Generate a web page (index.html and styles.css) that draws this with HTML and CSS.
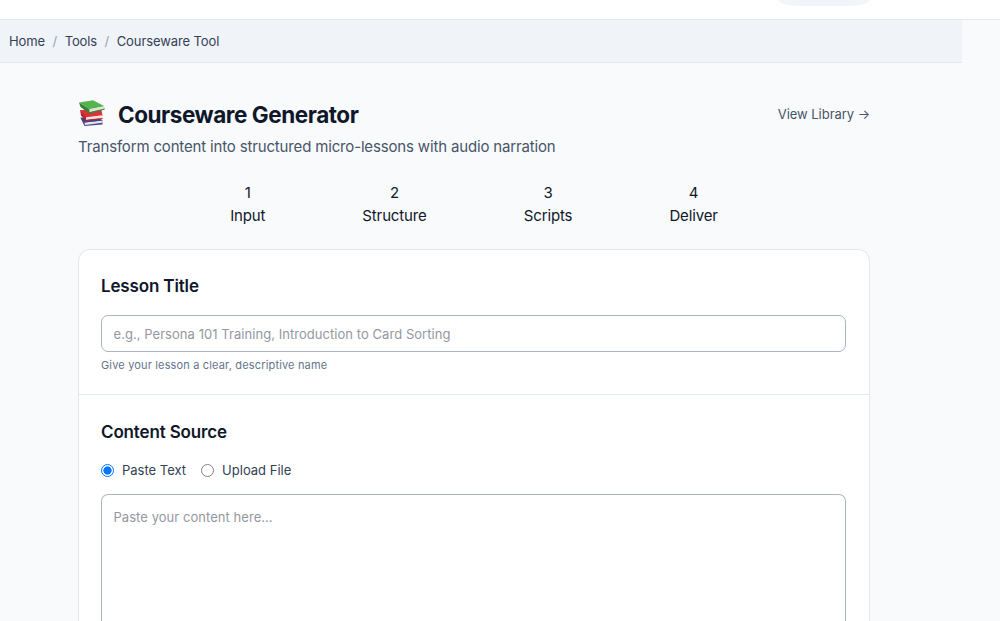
FILE: index.html
```
<!DOCTYPE html>
<html lang="en">
<head>
    <meta charset="UTF-8">
    <meta name="viewport" content="width=device-width, initial-scale=1.0">
    <title>Courseware Generator</title>
    <link rel="stylesheet" href="styles.css">
</head>
<body>
    <header class="topbar">
        <div class="topbar-pill"></div>
    </header>

    <nav class="breadcrumb">
        <a href="#">Home</a>
        <span class="sep">/</span>
        <a href="#">Tools</a>
        <span class="sep">/</span>
        <span>Courseware Tool</span>
    </nav>

    <main class="container">
        <div class="page-header">
            <h1>
                <svg class="books" viewBox="0 0 28 28">
                    <path d="M2.5 18 6.5 26l18-1.5v-4z" fill="#454a91"/>
                    <path d="m6.5 22.5 18-2v2.3L7 25z" fill="#e6e3ee"/>
                    <path d="m2.5 17.5 4 5 18-2-3-2z" fill="#3d4387"/>
                    <path d="m2 10 5 8 17.5-2-1-6z" fill="#da3236"/>
                    <path d="m8 17.3 16-2v2.7l-16 2z" fill="#f1e2e2"/>
                    <path d="m2 10 6 7.3v4L3 15.5z" fill="#b9242b"/>
                    <path d="m7.5 20 17-2v1.3l-17 2z" fill="#b9242b"/>
                    <path d="m1 2.5 14-2.3 11.5 6-15 3z" fill="#55b44d"/>
                    <path d="m1 2.5 10.5 6.7v4.5L2.5 7z" fill="#2f8238"/>
                    <path d="m11.5 9.2 15-3v2.6l-15 3.5z" fill="#dce5d5"/>
                    <path d="m11.5 12.2 15.3-3.7v1l-15.3 4.2z" fill="#38883b"/>
                </svg>
                <span>Courseware Generator</span>
            </h1>
            <a class="library-link" href="#">View Library →</a>
        </div>
        <p class="subtitle">Transform content into structured micro-lessons with audio narration</p>

        <div class="steps">
            <div class="step"><div>1</div><div>Input</div></div>
            <div class="step"><div>2</div><div>Structure</div></div>
            <div class="step"><div>3</div><div>Scripts</div></div>
            <div class="step"><div>4</div><div>Deliver</div></div>
        </div>

        <form class="card">
            <section class="card-section">
                <h2>Lesson Title</h2>
                <input class="field" type="text" placeholder="e.g., Persona 101 Training, Introduction to Card Sorting">
                <p class="hint">Give your lesson a clear, descriptive name</p>
            </section>
            <section class="card-section">
                <h2>Content Source</h2>
                <div class="radio-group">
                    <label><input type="radio" name="source" checked>Paste Text</label>
                    <label><input type="radio" name="source">Upload File</label>
                </div>
                <textarea class="field" placeholder="Paste your content here..."></textarea>
            </section>
        </form>
    </main>
</body>
</html>
```

FILE: styles.css
```
* {
    box-sizing: border-box;
}

body {
    margin: 0;
    font-family: Inter, sans-serif;
    font-size: 15px;
    color: #0f172a;
    background-color: #f9fafc;
}

h1, h2, p {
    margin: 0;
}

a {
    color: inherit;
    text-decoration: none;
}

/* Top bar */
.topbar {
    height: 20px;
    background-color: #fff;
    border-bottom: 1px solid #e2e8f0;
}

.topbar-pill {
    width: 90px;
    height: 6px;
    margin-left: 779px;
    border-radius: 0 0 20px 20px / 0 0 6px 6px;
    background-color: #f1f5f9;
}

/* Breadcrumb */
.breadcrumb {
    display: flex;
    align-items: center;
    gap: 7.5px;
    width: 962px;
    height: 43px;
    padding: 0 0 1px 9px;
    font-size: 13px;
    letter-spacing: -0.1px;
    color: #334155;
    background-color: #f0f3f8;
    border-bottom: 1px solid #e2e8f0;
}

.sep {
    color: #94a3b8;
}

/* Page header */
.container {
    width: 792px;
    margin-left: 78px;
    padding-top: 36px;
}

.page-header {
    display: flex;
    align-items: center;
    justify-content: space-between;
    height: 30px;
}

h1 {
    display: flex;
    align-items: center;
    gap: 12px;
    font-size: 22.5px;
    font-weight: 700;
    letter-spacing: -0.45px;
}

.books {
    width: 28px;
    height: 28px;
}

.library-link {
    font-size: 13px;
    letter-spacing: -0.05px;
    color: #475569;
}

.subtitle {
    margin-top: 6px;
    line-height: 23px;
    letter-spacing: -0.16px;
    color: #475569;
}

.steps {
    display: flex;
    justify-content: center;
    gap: 97px;
    margin-top: 23px;
    line-height: 23px;
    letter-spacing: -0.13px;
    text-align: center;
}

/* Form card */
.card {
    height: 372px;
    margin-top: 22px;
    background-color: #fff;
    border: 1px solid #e2e8f0;
    border-bottom: 0;
    border-radius: 12px 12px 0 0;
}

.card-section {
    padding: 23px 23px 0 22px;
}

.card-section:first-child {
    height: 145px;
    border-bottom: 1px solid #e2e8f0;
}

.card-section:last-child {
    padding-top: 24px;
}

h2 {
    font-size: 17px;
    font-weight: 600;
    line-height: 26px;
    letter-spacing: -0.15px;
}

.field {
    display: block;
    width: 100%;
    height: 37px;
    margin-top: 16px;
    padding: 0 11.5px;
    font: inherit;
    font-size: 13px;
    letter-spacing: 0.05px;
    border: 1px solid #aab5c4;
    border-radius: 7px;
    background-color: #fff;
}

.field::placeholder {
    color: #94979f;
}

.hint {
    margin-top: 4px;
    font-size: 11px;
    line-height: 18px;
    letter-spacing: 0.16px;
    color: #64748b;
}

.radio-group {
    display: flex;
    gap: 15px;
    margin-top: 15px;
    font-size: 13px;
    line-height: 20px;
    color: #334155;
}

.radio-group label {
    display: flex;
    align-items: center;
    gap: 8px;
}

.radio-group input {
    appearance: none;
    width: 13px;
    height: 13px;
    margin: 0;
    border: 1px solid #858585;
    border-radius: 50%;
}

.radio-group input:checked {
    border-color: #0075ff;
    background: radial-gradient(circle, #0075ff 3.8px, #fff 4.4px);
}

textarea.field {
    height: 127px;
    margin-top: 14px;
    padding-top: 12px;
    line-height: 20px;
    border-bottom: 0;
    border-radius: 7px 7px 0 0;
    resize: none;
}
```
